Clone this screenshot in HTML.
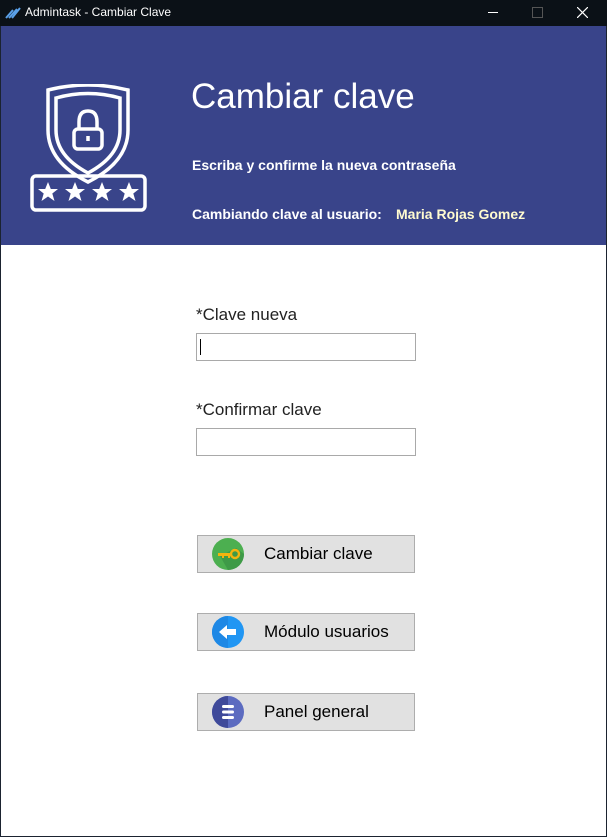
<!DOCTYPE html>
<html><head><style>
body{margin:0;width:607px;height:837px;position:relative;background:#fff;font-family:"Liberation Sans","DejaVu Sans",sans-serif;overflow:hidden}
.frame{position:absolute;left:0;top:0;width:605px;height:835px;border:1px solid #1b2330}
.tb{position:absolute;left:0;top:0;width:607px;height:26px;background:#0b1117;color:#fff;font-size:12px}
.hdr{position:absolute;left:1px;top:26px;width:605px;height:219px;background:#39448a;color:#fff}
.a{position:absolute;white-space:nowrap}
.lbl{position:absolute;left:196px;font-size:17px;color:#222}
.inp{position:absolute;left:196px;width:218px;height:26px;border:1px solid #a9a9a9;background:#fff}
.btn{position:absolute;left:197px;width:216px;height:36px;border:1px solid #adadad;background:#e1e1e1;font-size:17px;color:#000}
.btn span{position:absolute;left:66px;top:8px}
.btn svg{position:absolute;left:14px;top:2px}
</style></head><body>
<div class="frame"></div>
<div class="tb">
<svg class="a" style="left:5px;top:6px" width="16" height="14" viewBox="0 0 16 14"><path d="M1 12 L8 4 M4 12 L12 3 M7 12 L15 2" stroke="#5aa0e8" stroke-width="2"/></svg>
<span class="a" style="left:25px;top:5px">Admintask - Cambiar Clave</span>
<div class="a" style="left:488px;top:12px;width:10px;height:1px;background:#fff"></div>
<div class="a" style="left:532px;top:7px;width:9px;height:9px;border:1px solid #555"></div>
<svg class="a" style="left:577px;top:7px" width="11" height="11"><path d="M0 0L11 11M11 0L0 11" stroke="#fff" stroke-width="1.2"/></svg>
</div>
<div class="hdr">
<svg class="a" style="left:29px;top:58px" width="118" height="130" viewBox="0 0 118 130" fill="none" stroke="#fff" stroke-width="3.5">
<path d="M18 6 Q58 -4 98 6 V46 Q98 78 58 98 Q18 78 18 46 Z"/>
<path d="M26 14 Q58 5 90 14 V46 Q90 72 58 89 Q26 72 26 46 Z"/>
<rect x="44" y="45" width="28" height="20" rx="4"/>
<path d="M49 45 V38 Q49 27 58 27 Q67 27 67 38 V45"/>
<path d="M58 52 V57"/>
<rect x="2" y="92" width="113" height="34" rx="4"/>
<g fill="#fff" stroke="none">
<polygon id="s" points="18,98 20.8,105 28,105 22.3,109.5 24.5,117 18,112.5 11.5,117 13.7,109.5 8,105 15.2,105"/>
<use href="#s" x="27"/><use href="#s" x="54"/><use href="#s" x="81"/>
</g>
</svg>
<span class="a" style="left:190px;top:51px;font-size:35px">Cambiar clave</span>
<span class="a" style="left:191px;top:131px;font-size:14px;font-weight:bold">Escriba y confirme la nueva contraseña</span>
<span class="a" style="left:191px;top:180px;font-size:14px;font-weight:bold">Cambiando clave al usuario:</span>
<span class="a" style="left:395px;top:180px;font-size:14px;font-weight:bold;color:#fffbd0">Maria Rojas Gomez</span>
</div>
<div class="lbl" style="top:305px">*Clave nueva</div>
<div class="inp" style="top:333px"><div style="position:absolute;left:3px;top:5px;width:1px;height:16px;background:#000"></div></div>
<div class="lbl" style="top:400px">*Confirmar clave</div>
<div class="inp" style="top:428px"></div>
<div class="btn" style="top:535px"><svg width="32" height="32"><circle cx="16" cy="16" r="16" fill="#4caf50"/><path d="M16 32 A16 16 0 0 0 32 16 L24 10 L8 18Z" fill="#3e9a47"/><path d="M6 15H20V18H18V20H16V18H12V20H10V18H6Z" fill="#f2b40f"/><circle cx="23" cy="16" r="4" fill="none" stroke="#f2b40f" stroke-width="2.4"/></svg><span>Cambiar clave</span></div>
<div class="btn" style="top:613px"><svg width="32" height="32"><circle cx="16" cy="16" r="16" fill="#2196f3"/><path d="M16 0A16 16 0 0 0 16 32Z" fill="#1e88e5"/><path d="M7 16L15 9V13H24V19H15V23Z" fill="#fff"/></svg><span>Módulo usuarios</span></div>
<div class="btn" style="top:693px"><svg width="32" height="32"><circle cx="16" cy="16" r="16" fill="#5c6bc0"/><path d="M16 0A16 16 0 0 0 16 32Z" fill="#3f4a9a"/><rect x="10" y="9" width="12" height="3" rx="1.5" fill="#fff"/><rect x="10" y="14.5" width="12" height="3" rx="1.5" fill="#fff"/><rect x="10" y="20" width="12" height="3" rx="1.5" fill="#fff"/></svg><span>Panel general</span></div>
</body></html>
